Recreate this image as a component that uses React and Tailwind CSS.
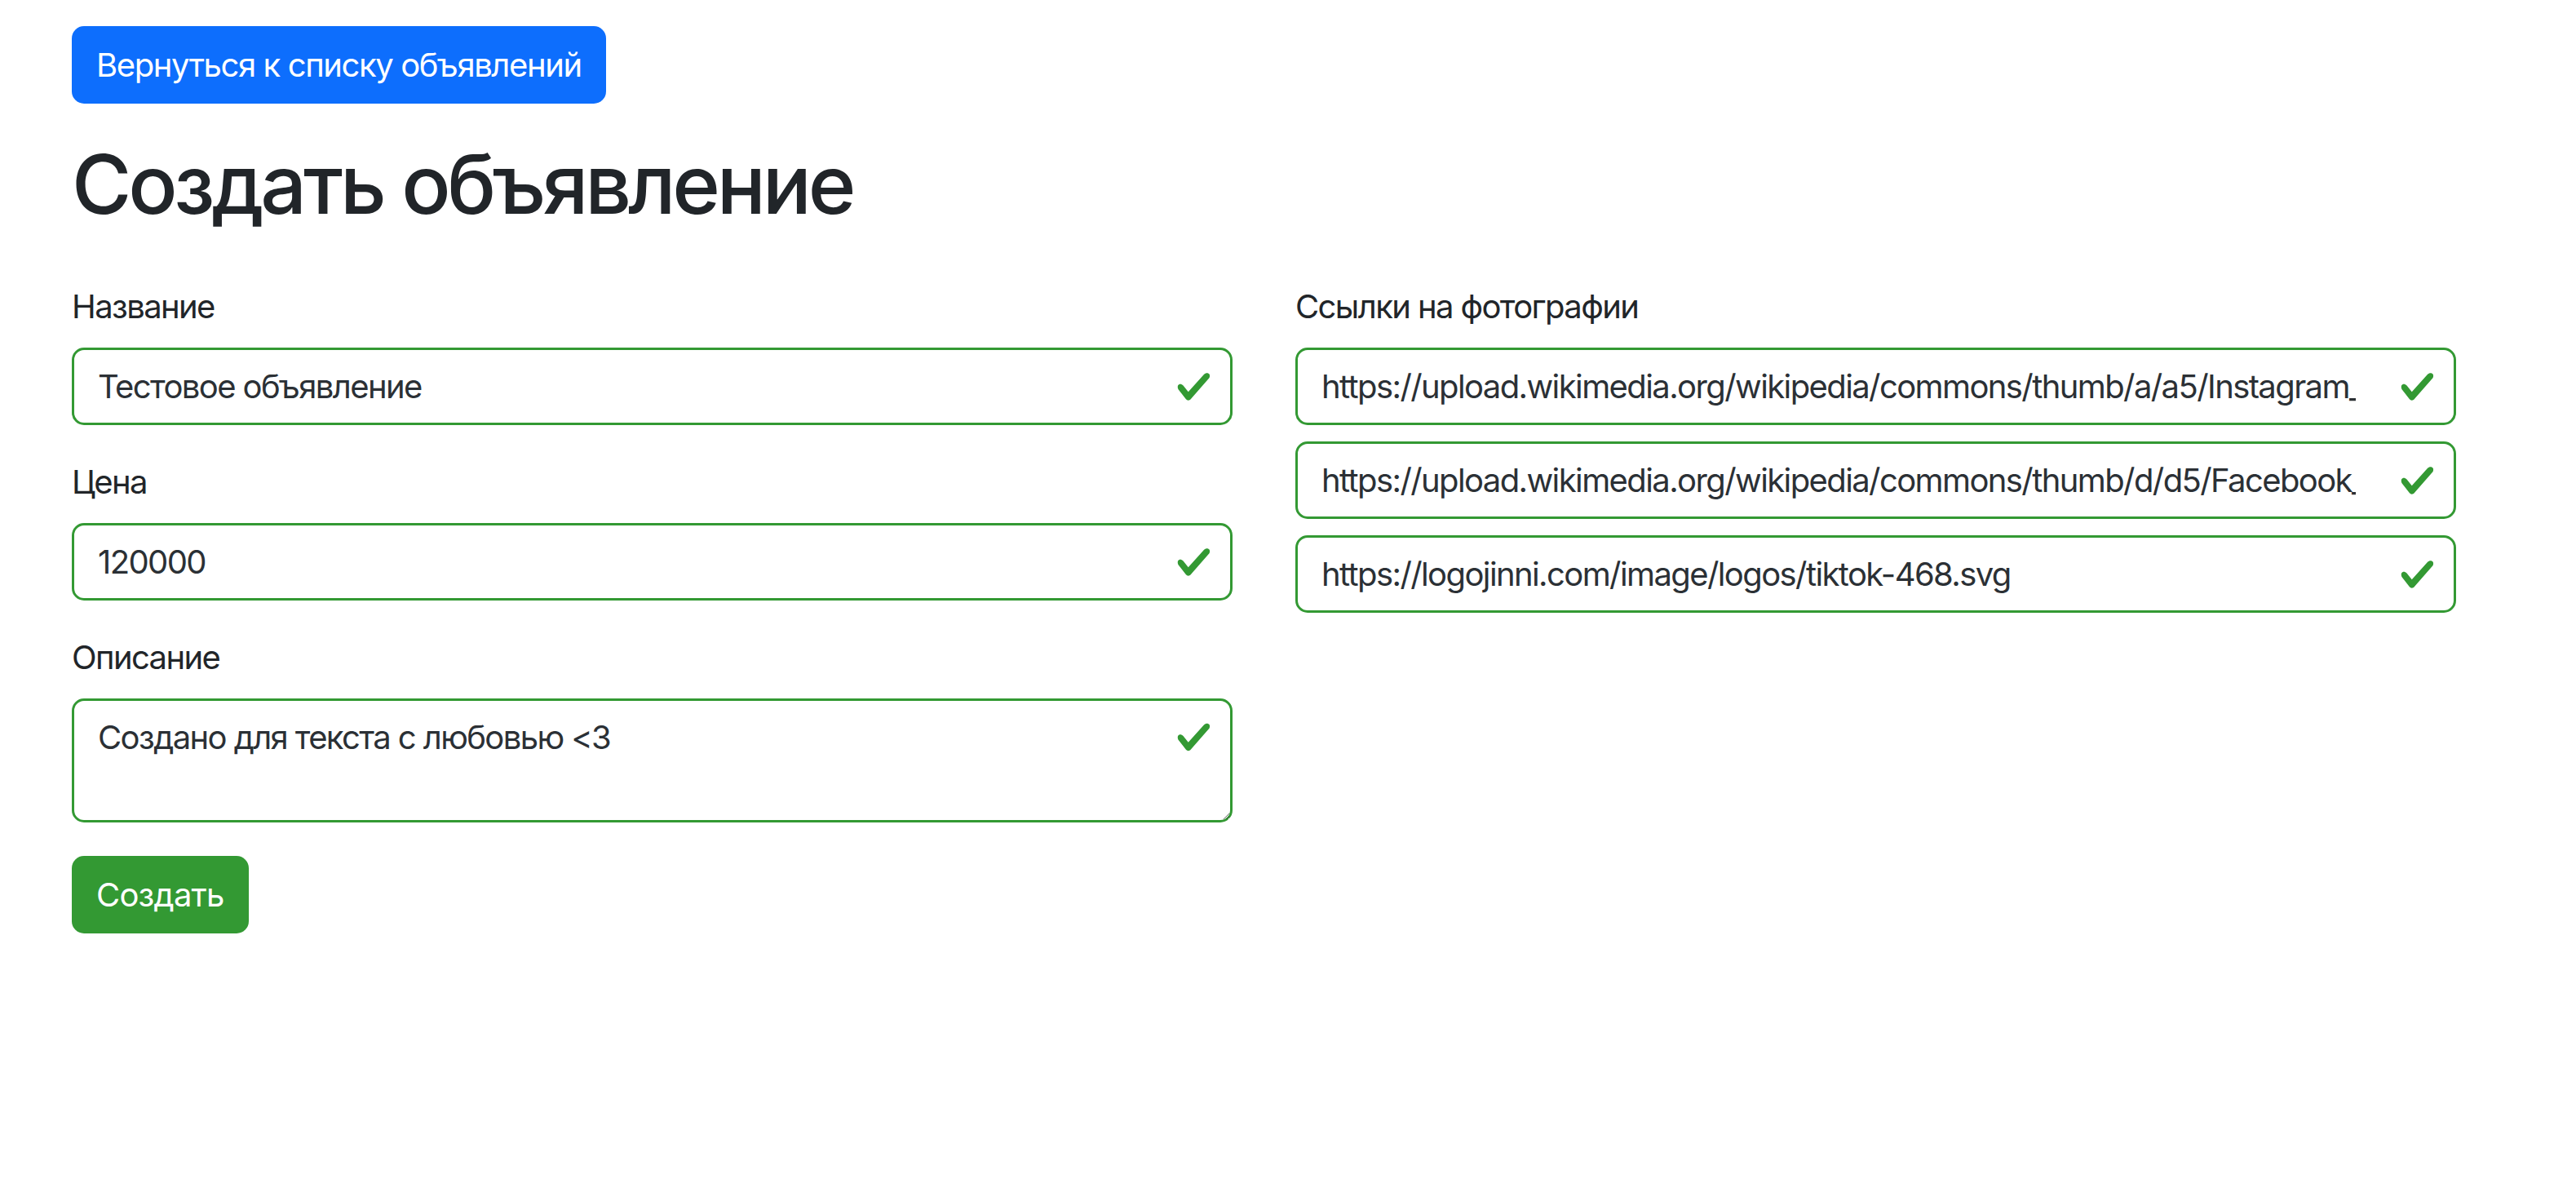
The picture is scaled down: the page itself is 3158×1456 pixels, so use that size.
import React from 'react';

const Check = ({ className }) => (
  <svg viewBox="0 0 8 8" className={className}>
    <path fill="#339933" d="M2.3 6.73.6 4.53c-.4-1.04.46-1.4 1.1-.8l1.1 1.4 3.4-3.8c.6-.63 1.6-.27 1.2.7l-4 4.6c-.43.5-.8.4-1.1.1z" />
  </svg>
);

const ValidInput = ({ value }) => (
  <div className="relative">
    <input
      readOnly
      defaultValue={value}
      className="block w-full h-[95px] border-[3px] border-[#339933] rounded-[15px] pl-[29px] pr-[120px] text-[40px] leading-[60px] tracking-[-0.04em] text-[#2b3035] outline-none bg-white"
    />
    <Check className="absolute right-[25px] top-1/2 -translate-y-1/2 w-[45px] h-[45px]" />
  </div>
);

const Label = ({ children }) => (
  <label className="block text-[40px] leading-[60px] mb-[20px] tracking-[-0.04em]">{children}</label>
);

const photos = [
  'https://upload.wikimedia.org/wikipedia/commons/thumb/a/a5/Instagram_icon.png/480px-Instagram_icon.png',
  'https://upload.wikimedia.org/wikipedia/commons/thumb/d/d5/Facebook_F_icon.svg/480px-Facebook_F_icon.svg.png',
  'https://logojinni.com/image/logos/tiktok-468.svg',
];

export default function App() {
  return (
    <div className="min-h-screen bg-white pl-[88px] pt-[32px] text-[#212529] font-['Inter','Liberation_Sans',sans-serif]">
      <button className="h-[95px] px-[30px] rounded-[15px] bg-[#0d6efd] text-white text-[40px] leading-[60px] tracking-[-0.035em]">
        Вернуться к списку объявлений
      </button>

      <h1 className="mt-[39px] mb-[60px] text-[100px] leading-[120px] font-medium tracking-[-0.042em]">Создать объявление</h1>

      <div className="flex gap-[77px]">
        {/* left column */}
        <div className="w-[1423px]">
          <Label>Название</Label>
          <ValidInput value="Тестовое объявление" />

          <div className="mt-[40px]">
            <Label>Цена</Label>
            <ValidInput value="120000" />
          </div>

          <div className="mt-[40px]">
            <Label>Описание</Label>
            <div className="relative">
              <textarea
                readOnly
                defaultValue="Создано для текста с любовью <3"
                className="block w-full h-[152px] border-[3px] border-[#339933] rounded-[15px] pl-[29px] pr-[120px] py-[15px] text-[40px] leading-[60px] tracking-[-0.04em] text-[#2b3035] outline-none resize-y"
              />
              <Check className="absolute right-[25px] top-[25px] w-[45px] h-[45px]" />
            </div>
          </div>

          <button className="mt-[41px] h-[95px] px-[30px] rounded-[15px] bg-[#339933] text-white text-[40px] leading-[60px] tracking-[-0.02em]">
            Создать
          </button>
        </div>

        {/* right column */}
        <div className="w-[1423px]">
          <Label>Ссылки на фотографии</Label>
          <div className="flex flex-col gap-[20px]">
            {photos.map((p) => (
              <ValidInput key={p} value={p} />
            ))}
          </div>
        </div>
      </div>
    </div>
  );
}
